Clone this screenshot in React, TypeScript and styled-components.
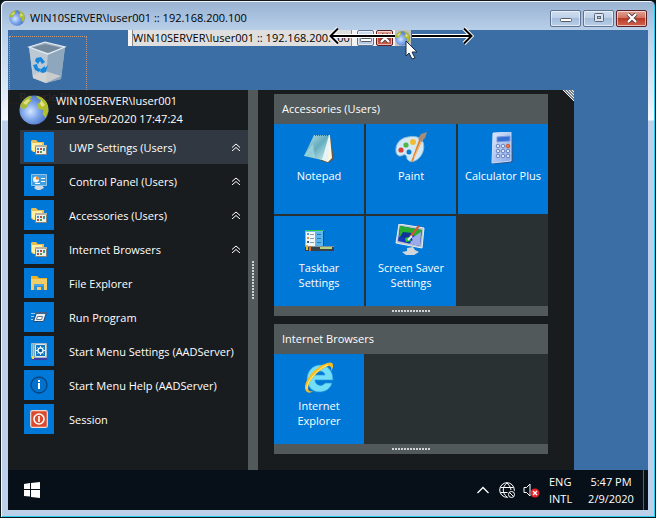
import React from "react";
import styled, { createGlobalStyle } from "styled-components";

const GlobalStyle = createGlobalStyle`
  *, *::before, *::after { box-sizing: border-box; }
  body {
    margin: 0;
    background: #06141c;
    font-family: "Open Sans", "Noto Sans", sans-serif;
    font-size: 11px;
    color: #fff;
  }
  button { font: inherit; color: inherit; border: 0; padding: 0; margin: 0; background: none; }
  svg { display: block; flex: none; }
`;

const Frame = styled.div`
  min-height: 100vh;
  display: flex;
  flex-direction: column;
  padding: 1px 6px 7px;
  border: 1px solid #10181e;
  border-right: 1px solid #06141c;
  border-radius: 6px 6px 0 0;
  background: linear-gradient(#98b2d1, #b9d0ea 30px, #dde9f6 90px, #f4f8fd 119px, #bcd0ea 120px);
  box-shadow: inset 1px 1px 0 #f4f8fc, inset -1px -1px 0 #23cdf0;
`;

const TitleBar = styled.header`
  display: flex;
  align-items: center;
  height: 28px;
  gap: 5px;
  padding: 0 2px;
  color: #000;
`;

const Title = styled.h1`
  flex: 1;
  margin: 0;
  padding-top: 4px;
  font-size: 11px;
  font-weight: 400;
  line-height: 16px;
`;

const TitleGlobe = styled.span`
  padding-top: 4px;
`;

const WindowButtons = styled.div`
  display: flex;
  gap: 2px;
  padding-top: 4px;
`;

const CaptionButton = styled.button<{ $close?: boolean; $small?: boolean }>`
  width: ${(p) => (p.$small ? 17 : 31)}px;
  height: ${(p) => (p.$small ? 16 : 17)}px;
  display: grid;
  place-items: center;
  border: 1px solid ${(p) => (p.$close ? "#5c2028" : "#5f7390")};
  border-radius: 2px;
  box-shadow: inset 0 0 0 1px rgba(255, 255, 255, 0.55);
  background: ${(p) =>
    p.$close
      ? "linear-gradient(#e0a495, #d06f5b 48%, #bb3a24 50%, #cf6450)"
      : "linear-gradient(#cfdef0, #bdd0e8 48%, #a5bddb 50%, #b9cfe9)"};
`;

const Desktop = styled.main`
  position: relative;
  flex: 1;
  display: flex;
  flex-direction: column;
  justify-content: flex-end;
  margin: 0 1px;
  background: #3a6ea5;
`;

const DesktopIcon = styled.button`
  position: absolute;
  left: 1px;
  top: 6px;
  width: 78px;
  height: 68px;
  display: flex;
  flex-direction: column;
  align-items: center;
  gap: 4px;
  padding-top: 2px;
  border: 1px dotted #c69a78;
  line-height: 16px;
`;

const ConnectionBar = styled.div`
  position: absolute;
  left: 120px;
  top: 0;
  display: flex;
  align-items: center;
  gap: 2px;
  height: 16px;
  padding-left: 4px;
  background: #f4f4f4;
  color: #000;
`;

const ConnectionName = styled.span`
  width: 220px;
  margin-right: 3px;
  border-left: 1px solid #8a8a8a;
  border-right: 1px solid #8a8a8a;
  background: #dfdfdf;
  line-height: 16px;
  white-space: nowrap;
`;

const GlobeButton = styled.button`
  position: relative;
  z-index: 2;
  width: 16px;
  height: 16px;
  background: #c2c2ba;
`;

const DragArrow = styled.svg`
  position: absolute;
  left: 320px;
  top: -3px;
`;

const Pointer = styled.svg`
  position: absolute;
  z-index: 3;
  left: 397px;
  top: 10px;
`;

const StartMenu = styled.section`
  position: relative;
  display: grid;
  grid-template-columns: 240px 10px auto;
  width: fit-content;
  background: rgba(22, 19, 17, 0.9);
`;

const Account = styled.div`
  display: flex;
  align-items: center;
  gap: 7px;
  height: 40px;
  padding-left: 11px;
  line-height: 18px;
  p { margin: 0; }
`;

const MenuList = styled.nav`
  display: flex;
  flex-direction: column;
  padding-left: 12px;
`;

const MenuRow = styled.button<{ $active?: boolean }>`
  display: flex;
  align-items: center;
  height: 34px;
  padding: 0 7px 0 4px;
  gap: 15px;
  text-align: left;
  background: ${(p) => (p.$active ? "#323841" : "transparent")};
`;

const RowLabel = styled.span`
  flex: 1;
  white-space: nowrap;
`;

const IconBox = styled.span`
  display: grid;
  place-items: center;
  width: 30px;
  height: 30px;
  background: #0078d7;
`;

const Splitter = styled.div`
  display: flex;
  align-items: center;
  justify-content: center;
  background: #51595a;
`;

const Grip = styled.span<{ $vertical?: boolean }>`
  width: ${(p) => (p.$vertical ? 2 : 38)}px;
  height: ${(p) => (p.$vertical ? 38 : 2)}px;
  background: repeating-linear-gradient(
    ${(p) => (p.$vertical ? "180deg" : "90deg")},
    #d0d3d6 0 2px,
    transparent 2px 3px
  );
`;

const TilePane = styled.div`
  display: flex;
  flex-direction: column;
  gap: 8px;
  padding: 4px 26px 16px 16px;
`;

const Group = styled.section`
  background: #2a3133;
`;

const GroupHeader = styled.h2`
  margin: 0;
  padding-left: 8px;
  font-size: 11px;
  font-weight: 400;
  line-height: 30px;
  background: #51595a;
`;

const TileGrid = styled.div`
  display: grid;
  grid-template-columns: repeat(3, 90px);
  gap: 2px;
`;

const Tile = styled.button`
  display: flex;
  flex-direction: column;
  align-items: center;
  height: 90px;
  padding: 8px 4px 0;
  gap: 4px;
  line-height: 15px;
  background: #0078d7;
`;

const GroupFooter = styled.div`
  display: flex;
  align-items: center;
  justify-content: center;
  height: 10px;
  background: #51595a;
`;

const Corner = styled.svg`
  position: absolute;
  right: 0;
  top: 0;
`;

const Taskbar = styled.footer`
  display: flex;
  align-items: center;
  justify-content: space-between;
  height: 40px;
  background: #071018;
`;

const StartButton = styled.button`
  display: grid;
  place-items: center;
  width: 48px;
  height: 40px;
`;

const Tray = styled.div`
  display: flex;
  align-items: center;
  height: 40px;
`;

const TrayButton = styled.button`
  display: grid;
  place-items: center;
  width: 24px;
  height: 40px;
`;

const TrayText = styled.button<{ $w: number; $left?: boolean }>`
  display: flex;
  flex-direction: column;
  width: ${(p) => p.$w}px;
  padding-left: ${(p) => (p.$left ? 6 : 0)}px;
  align-items: ${(p) => (p.$left ? "flex-start" : "center")};
  line-height: 17px;
`;

const ShowDesktop = styled.button`
  width: 5px;
  height: 40px;
  border-left: 1px solid #59616a;
`;

const Globe = ({ size, id }: { size: number; id: string }) => (
  <svg width={size} height={size} viewBox="0 0 30 30" aria-hidden="true">
    <defs>
      <radialGradient id={id} cx="38%" cy="55%" r="65%">
        <stop offset="0" stopColor="#d3e6ff" />
        <stop offset=".45" stopColor="#7ea6ea" />
        <stop offset="1" stopColor="#3c66bc" />
      </radialGradient>
    </defs>
    <circle cx="15" cy="15" r="14.5" fill={`url(#${id})`} />
    <path d="M2 9C4 5 7 2 11 1l2 1-2 2 2 2-3 2-2 4-3 2-3-1-1-2Z" fill="#a9bb35" />
    <path d="M17 1c6 0 11 5 12 10l.5 5-3 7-3-4 1-4-5-1-1-5 4-3-4-3Z" fill="#b2bf2d" />
    <path d="m4 8 5-4 2 1-4 5Zm18-3 4 5-3 2-2-3Z" fill="#e2e084" />
  </svg>
);

const RecycleBin = () => (
  <svg width="42" height="46" viewBox="0 0 42 46" aria-hidden="true">
    <path d="m2 8 16-5 20 5-4 32-15 4-13-5Z" fill="#a5b8ca" />
    <path d="m2 8 19 7-2 29-13-5Z" fill="#bcc9d4" />
    <path d="m21 15 17-7-4 32-15 4Z" fill="#8ea7bd" />
    <path d="m4 9 14-4 17 4-14 5Z" fill="#75899d" />
    <path d="m2 8 16-5 20 5-17 7Z" fill="none" stroke="#e6edf3" strokeWidth="1.2" />
    <path d="m6 36 12-4 16 5-15 7-13-5Z" fill="#d7d6d3" opacity=".8" />
    <path d="m9 19 5-1 4 5-3 2-2-3-2 3-3-3Zm-3 7 4-1 1 4 3 1-2 3-4-2Zm8 4 4-3v2l3-3-2 7-3 1-3-1Z" fill="#1685dc" />
  </svg>
);

const FolderGroup = () => (
  <svg width="18" height="18" viewBox="0 0 18 18" aria-hidden="true">
    <path d="M1 3 2 2h4l2 2h6v10H3l-2-2Z" fill="#e4bf57" />
    <path d="M2 5h10v3H5v6l-3-2Z" fill="#fff0a4" />
    <path d="M5.500 7.500h11v9h-11Z" fill="#eceee8" stroke="#8a8378" />
    <path d="M5 7h12v2H5Z" fill="#b9b3a6" />
    <path d="M8 10v2m6-1v2" stroke="#3f8fc3" strokeWidth="2" />
    <path d="M11 10v2m-3 1v2" stroke="#ba4a3c" strokeWidth="2" />
    <path d="M11 13v2m3-5v1" stroke="#4e9a51" strokeWidth="2" />
  </svg>
);

const ControlPanel = () => (
  <svg width="18" height="18" viewBox="0 0 18 18" aria-hidden="true">
    <path d="M6 13h6l2 3-4 2H7l-3-2Z" fill="#d3d9df" />
    <path d="M1.500 2.500h15v11h-15Z" fill="#3f9fe2" stroke="#8fc4e8" />
    <circle cx="6" cy="7.500" r="3" fill="#e7f4fb" />
    <path d="M6 7.500v-3a3 3 0 0 1 3 3Z" fill="#f28a24" />
    <path d="M11 6.500h4M11 9.500h4M5 11.500h5" stroke="#fff" />
  </svg>
);

const Explorer = () => (
  <svg width="18" height="18" viewBox="0 0 18 18" aria-hidden="true">
    <path d="M1 2h6l2 2h8v12H1Z" fill="#eeb229" />
    <path d="M1 5h16v11H1Z" fill="#f3ce68" />
    <path d="M4 10h10v6h-3v-3H7v3H4Z" fill="#2f8fd8" />
    <path d="M4 10h10v2H4Z" fill="#4aa3e2" />
  </svg>
);

const RunIcon = () => (
  <svg width="18" height="18" viewBox="0 0 18 18" aria-hidden="true">
    <path d="M1 5.500h4M1 8.500h3M1 11.500h2" stroke="#9fc7ec" />
    <path d="M6.500 4.500h10l-3 9h-10Z" fill="#e7edf3" stroke="#294a71" />
    <path d="M6 4h11l-1 2H5Z" fill="#426486" />
    <path d="M7.500 8.500h5l-1 3h-5Z" fill="#fff" stroke="#65798d" />
  </svg>
);

const SettingsIcon = () => (
  <svg width="18" height="18" viewBox="0 0 18 18" aria-hidden="true">
    <path d="M1.500 1.500h15v14h-15Z" fill="#318fc9" stroke="#a9b7c3" />
    <path d="M3.500 2v13" stroke="#b5c4cf" strokeWidth="2" />
    <path d="M5.500 2.500h10v12h-10Z" fill="#1277bb" stroke="#d9e9f2" />
    <circle cx="10.500" cy="8.500" r="2.500" fill="#075c9f" stroke="#e8f7ff" strokeWidth="1.4" />
    <path d="M10.500 4v2m0 5v2M6 8.500h2m5 0h2M7.500 5.500l1 1m4 4 1 1m0-6-1 1m-4 4-1 1" stroke="#e8f7ff" />
    <path d="M2 17h15" stroke="#3941a6" strokeWidth="2" />
    <path d="M2 14h2v3H2Z" fill="#eee044" />
  </svg>
);

const InfoIcon = () => (
  <svg width="18" height="18" viewBox="0 0 18 18" aria-hidden="true">
    <circle cx="9" cy="9" r="8" fill="#0071cc" stroke="#07447e" strokeWidth="1.3" />
    <path d="M9 7v6M9 4v2" stroke="#fff" strokeWidth="2" />
  </svg>
);

const PowerIcon = () => (
  <svg width="18" height="18" viewBox="0 0 18 18" aria-hidden="true">
    <rect x="0.7" y="0.7" width="16.6" height="16.6" rx="1.5" fill="#da4a2d" stroke="#f0d8d1" strokeWidth="1.2" />
    <circle cx="9" cy="9" r="5" fill="none" stroke="#fff" strokeWidth="1.6" />
    <path d="M9 6v6" stroke="#fff" strokeWidth="1.6" />
  </svg>
);

const ExpandIcon = () => (
  <svg width="10" height="8" viewBox="0 0 10 8" aria-hidden="true">
    <path d="m1 4.500 4-3.500 4 3.500M1 8l4-3.500L9 8" fill="none" stroke="#fff" />
  </svg>
);

const NotepadIcon = () => (
  <svg width="32" height="32" viewBox="0 0 32 32" aria-hidden="true">
    <defs>
      <linearGradient id="note" x2="1" y2="1">
        <stop stopColor="#c4e5e9" /><stop offset=".5" stopColor="#65adbf" /><stop offset="1" stopColor="#d2f0ee" />
      </linearGradient>
    </defs>
    <path d="m27 4 4 23-6 4-9-3Z" fill="#645c4b" />
    <path d="m27 4 2 22-4 4-8-3Z" fill="#fff5dc" />
    <path d="M12 3h15l-2 27-8-3Z" fill="#e8f3f3" />
    <path d="M11 3h15l-7 25L1 24Z" fill="url(#note)" />
    <path d="m2 22 8-10 2 14-11-2Z" fill="#b9e9e9" opacity=".5" />
    <path d="M12 2.500h14" stroke="#555f62" strokeWidth="3" strokeDasharray="1 1" />
  </svg>
);

const PaintIcon = () => (
  <svg width="34" height="32" viewBox="0 0 34 32" aria-hidden="true">
    <path d="M14 5C6 6 1 12 2 20c1 4 4 5 7 3 3-1 4 1 4 4 3 4 8 3 12-1 6-6 6-15 2-19-4-3-9-3-13-2Z" fill="#d3e8f5" stroke="#8cbbd5" />
    <circle cx="15" cy="20" r="2.500" fill="#087ad2" />
    <circle cx="12" cy="13" r="2.600" fill="#55b344" /><circle cx="19" cy="10" r="3" fill="#f3bc35" />
    <circle cx="7" cy="18" r="2.600" fill="#dc4038" />
    <path d="M29 7 19 29l-2 2 1-4L26 5Z" fill="#df842c" />
    <path d="m20 26 8-19" stroke="#ffc47e" />
    <path d="m24 7 3-5 6-2-2 6-4 4Z" fill="#a88d74" />
  </svg>
);

const CalculatorIcon = () => (
  <svg width="24" height="32" viewBox="0 0 24 32" aria-hidden="true">
    <defs><linearGradient id="calc" x2="1" y2="1"><stop stopColor="#dfe8fd" /><stop offset="1" stopColor="#86a8e4" /></linearGradient></defs>
    <path d="m3 1 18-1 1 29-3 2-17 1Z" fill="#2f5894" />
    <path d="M2 1 20 0v29L1 31Z" fill="url(#calc)" stroke="#c9dafa" />
    <path d="m6 5 13-1v5L6 10Z" fill="#376fd9" stroke="#7c9edb" />
    {[14, 19, 24].map((y) => [7, 12, 17].map((x) => (
      <circle key={`${x}-${y}`} cx={x} cy={y} r="1.8" fill={x === 17 && y === 14 ? "#ee7b46" : "#dce8ff"} stroke={x === 17 && y === 14 ? "#c65536" : "#6782c1"} />
    )))}
  </svg>
);

const TaskbarIcon = () => (
  <svg width="32" height="32" viewBox="0 0 32 32" aria-hidden="true">
    <path d="M2 7h19v18H2Z" fill="#7bbbe5" />
    <path d="M2 6.500h19" stroke="#24c84a" /><path d="M20.500 7v16" stroke="#164fa0" />
    <path d="M3 8h9v15H3Z" fill="#f1f6f8" />
    <path d="M12 8h8v15h-8Z" fill="#5db4ea" />
    <path d="M4 9h2v2H4Z" fill="#5a9bd2" /><path d="M4 13h2v2H4Z" fill="#de9a35" /><path d="M4 17h2v2H4Z" fill="#375e8a" />
    <path d="M7 10.500h4M7 14.500h4M7 18.500h4" stroke="#8a9ba9" />
    <path d="M14 10.500h4m-4 4h4m-4 4h4" stroke="#2478b9" />
    <path d="M2 22h29v5H2Z" fill="#384149" /><path d="M2 22.500h29" stroke="#84939b" />
    <path d="M17 23h12v2H17Z" fill="#b8d17b" />
    <path d="M4 21v5" stroke="#e5b837" strokeWidth="2" /><path d="M7 22v5" stroke="#c8742a" strokeWidth="2" />
  </svg>
);

const ScreenSaverIcon = () => (
  <svg width="32" height="32" viewBox="0 0 32 32" aria-hidden="true">
    <path d="m12 24 6-1 2 3 4 2-5 3h-8l-4-3 5-1Z" fill="#d3d6d8" />
    <path d="m4 0 25 4-2 20L1 19Z" fill="#b9c3ca" stroke="#ebeff1" />
    <path d="m5 2 22 4-2 16L3 17Z" fill="#1738be" />
    <path d="m5 2 22 4-1 8-9-3-13 2Z" fill="#28ad30" />
    <path d="M17 14 26 8l-1 14-10-2Z" fill="#9cacea" />
    <path d="m8 8 9 1-2 4 3 3-6 3-3-5-4-1Z" fill="#11349a" />
    <path d="m10 14 4-1 2 4-5 1Z" fill="#28c63d" />
    <path d="m15 13 9-11" stroke="#d65638" strokeWidth="2" /><path d="m13 16 4-4" stroke="#e5edfa" strokeWidth="2" />
  </svg>
);

const ExplorerBrowserIcon = () => (
  <svg width="32" height="32" viewBox="0 0 32 32" aria-hidden="true">
    <path d="M30 18H12c0 6 8 7 10 3h7c-2 7-8 9-13 9C9 30 4 24 4 17 4 9 10 3 17 3c8 0 13 6 13 15ZM12 13h10c-1-5-9-5-10 0Z" fill="#73def8" stroke="#239ad8" strokeWidth=".7" />
    <path d="M4 30c-5-4 0-15 8-22C19 2 27-1 29 1c2 2 1 5-1 8 1-5-1-6-5-4C14 9 5 20 5 26c0 3 2 4 5 3-2 2-4 2-6 1Z" fill="#f7bd20" />
    <path d="M4 27C3 20 15 6 25 3" fill="none" stroke="#fff39a" />
  </svg>
);

const WindowGlyph = ({ kind }: { kind: "min" | "max" | "close" }) => (
  <svg width="12" height="10" viewBox="0 0 12 10" aria-hidden="true">
    {kind === "min" && <rect x="0.500" y="5.500" width="11" height="3" rx="1" fill="#fff" stroke="#555b64" />}
    {kind === "max" && <><rect x="1.5" y="0.5" width="9" height="8" rx="1" fill="#dce5ef" stroke="#59677a" /><rect x="4.5" y="3.5" width="3" height="2" fill="#b9cae0" stroke="#59677a" /></>}
    {kind === "close" && <><path d="m2 1 8 8m0-8L2 9" stroke="#5a4248" strokeWidth="4" /><path d="m2 1 8 8m0-8L2 9" stroke="#fff" strokeWidth="2.2" /></>}
  </svg>
);

const menuItems = [
  { label: "UWP Settings (Users)", icon: <FolderGroup />, more: true, active: true },
  { label: "Control Panel (Users)", icon: <ControlPanel />, more: true },
  { label: "Accessories (Users)", icon: <FolderGroup />, more: true },
  { label: "Internet Browsers", icon: <FolderGroup />, more: true },
  { label: "File Explorer", icon: <Explorer /> },
  { label: "Run Program", icon: <RunIcon /> },
  { label: "Start Menu Settings (AADServer)", icon: <SettingsIcon /> },
  { label: "Start Menu Help (AADServer)", icon: <InfoIcon /> },
  { label: "Session", icon: <PowerIcon /> },
];

const groups = [
  {
    title: "Accessories (Users)",
    tiles: [
      { label: "Notepad", icon: <NotepadIcon /> },
      { label: "Paint", icon: <PaintIcon /> },
      { label: "Calculator Plus", icon: <CalculatorIcon /> },
      { label: "Taskbar Settings", icon: <TaskbarIcon /> },
      { label: "Screen Saver Settings", icon: <ScreenSaverIcon /> },
    ],
  },
  { title: "Internet Browsers", tiles: [{ label: "Internet Explorer", icon: <ExplorerBrowserIcon /> }] },
];

export default function App() {
  return (
    <>
      <GlobalStyle />
      <Frame>
        <TitleBar>
          <TitleGlobe><Globe size={16} id="globe-title" /></TitleGlobe>
          <Title>WIN10SERVER\Iuser001 :: 192.168.200.100</Title>
          <WindowButtons>
            <CaptionButton aria-label="Minimize"><WindowGlyph kind="min" /></CaptionButton>
            <CaptionButton aria-label="Maximize"><WindowGlyph kind="max" /></CaptionButton>
            <CaptionButton $close aria-label="Close"><WindowGlyph kind="close" /></CaptionButton>
          </WindowButtons>
        </TitleBar>
        <Desktop>
          <DesktopIcon>
            <RecycleBin />
            <span>Recycle Bin</span>
          </DesktopIcon>
          <ConnectionBar>
            <ConnectionName>WIN10SERVER\Iuser001 :: 192.168.200.100</ConnectionName>
            <CaptionButton $small aria-label="Minimize session"><WindowGlyph kind="min" /></CaptionButton>
            <CaptionButton $small $close aria-label="Close session"><WindowGlyph kind="close" /></CaptionButton>
            <GlobeButton aria-label="Connection"><Globe size={15} id="globe-bar" /></GlobeButton>
          </ConnectionBar>
          <DragArrow width="146" height="19" viewBox="0 0 146 19" aria-hidden="true">
            <path d="M3 9h66m15 0h59M10 1.500 2.500 9l7.500 7.500M136 1.500l7.500 7.500-7.500 7.500" fill="none" stroke="#fff" strokeWidth="4" />
            <path d="M3 9h64m17 0h59M10 1.500 2.500 9l7.500 7.500M136 1.500l7.500 7.500-7.500 7.500" fill="none" stroke="#000" strokeWidth="2" />
          </DragArrow>
          <Pointer width="14" height="21" viewBox="0 0 14 21" aria-hidden="true">
            <path d="M1 1v15l3-3 3 6 3-1-3-6h5Z" fill="#fff" stroke="#182b45" />
          </Pointer>
          <StartMenu>
            <div>
              <Account>
                <Globe size={30} id="globe-account" />
                <div>
                  <p>WIN10SERVER\Iuser001</p>
                  <p>Sun 9/Feb/2020 17:47:24</p>
                </div>
              </Account>
              <MenuList>
                {menuItems.map((item) => (
                  <MenuRow key={item.label} $active={item.active}>
                    <IconBox>{item.icon}</IconBox>
                    <RowLabel>{item.label}</RowLabel>
                    {item.more && <ExpandIcon />}
                  </MenuRow>
                ))}
              </MenuList>
            </div>
            <Splitter><Grip $vertical /></Splitter>
            <TilePane>
              {groups.map((group) => (
                <Group key={group.title}>
                  <GroupHeader>{group.title}</GroupHeader>
                  <TileGrid>
                    {group.tiles.map((tile) => (
                      <Tile key={tile.label}>
                        {tile.icon}
                        <span>{tile.label}</span>
                      </Tile>
                    ))}
                  </TileGrid>
                  <GroupFooter><Grip /></GroupFooter>
                </Group>
              ))}
            </TilePane>
            <Corner width="11" height="11" viewBox="0 0 11 11" aria-hidden="true">
              <path d="M0 0h11v11Z" fill="#788088" />
              <path d="m0 0 11 11M3 0l8 8M6 0l5 5M9 0l2 2" stroke="#f3f5f6" />
            </Corner>
          </StartMenu>
          <Taskbar>
            <StartButton aria-label="Start">
              <svg width="16" height="16" viewBox="0 0 16 16" aria-hidden="true">
                <path d="m0 2 6-1v6H0Zm7-1 9-1v7H7ZM0 8h6v6.500L0 14Zm7 0h9v8l-9-1Z" fill="#fff" />
              </svg>
            </StartButton>
            <Tray>
              <TrayButton aria-label="Show hidden icons">
                <svg width="12" height="8" viewBox="0 0 12 8" aria-hidden="true"><path d="m.5 7 5.500-5.500L11.500 7" fill="none" stroke="#fff" strokeWidth="1.3" /></svg>
              </TrayButton>
              <TrayButton aria-label="Network">
                <svg width="17" height="17" viewBox="0 0 17 17" fill="none" stroke="#fff" aria-hidden="true">
                  <circle cx="8" cy="8" r="7.300" />
                  <path d="M8 1C3 5 3 11 8 15M8 1c3 3 4 5 4 8M1.500 5.500h13M1.500 10.500h8" />
                  <circle cx="12.500" cy="12.500" r="4.500" fill="#071018" stroke="none" />
                  <circle cx="12.500" cy="12.500" r="3" /><path d="m10.500 10.500 4 4" />
                </svg>
              </TrayButton>
              <TrayButton aria-label="Volume">
                <svg width="17" height="16" viewBox="0 0 17 16" fill="none" aria-hidden="true">
                  <path d="M1 5.500h2.500L7 2v12l-3.500-3.500H1Z" stroke="#fff" />
                  <circle cx="12" cy="11" r="4.500" fill="#e4242b" />
                  <path d="m10 9 4 4m0-4-4 4" stroke="#fff" strokeWidth="1.3" />
                </svg>
              </TrayButton>
              <TrayText $w={36} $left aria-label="ENG INTL"><span>ENG</span><span>INTL</span></TrayText>
              <TrayText $w={64}><time>5:47 PM</time><span>2/9/2020</span></TrayText>
              <ShowDesktop aria-label="Show desktop" />
            </Tray>
          </Taskbar>
        </Desktop>
      </Frame>
    </>
  );
}
